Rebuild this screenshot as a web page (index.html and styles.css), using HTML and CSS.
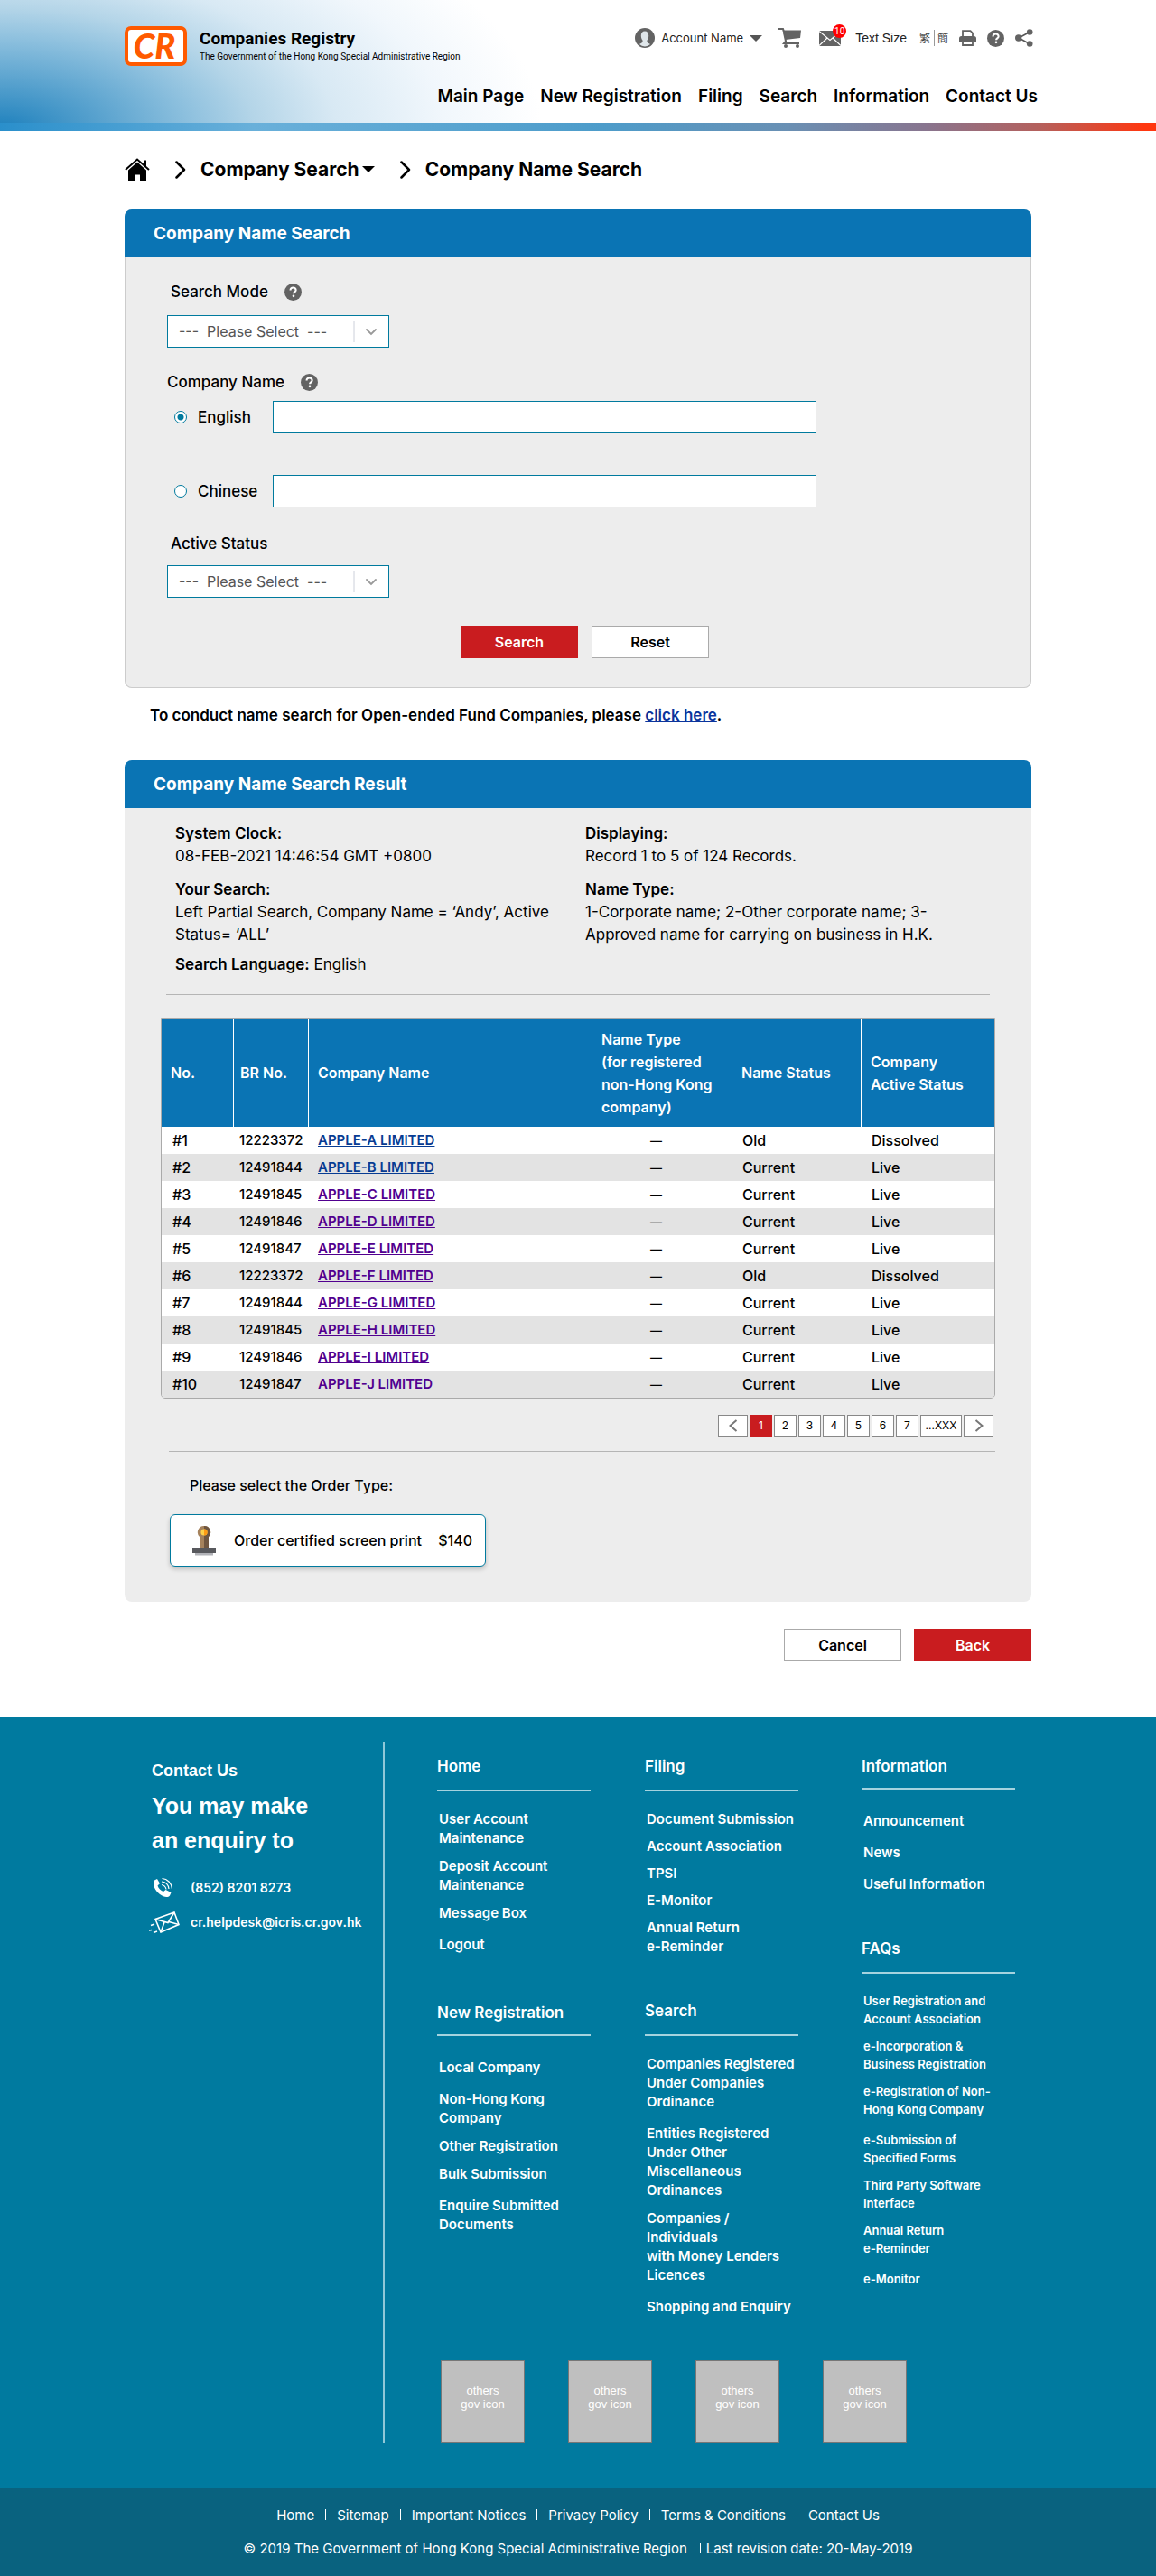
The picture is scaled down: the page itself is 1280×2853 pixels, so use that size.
FILE: index.html
```html
<!DOCTYPE html>
<html lang="en">
<head>
<meta charset="utf-8">
<meta name="viewport" content="width=device-width, initial-scale=1">
<title>Company Name Search - Companies Registry</title>
<link rel="stylesheet" href="styles.css">
</head>
<body>
<svg class="sprite" aria-hidden="true">
  <symbol id="i-help" viewBox="0 0 20 20"><circle cx="10" cy="10" r="10" fill="#636363"/><path d="M6.9 7.9C6.9 5.9 8.2 4.8 10.1 4.8s3.2 1.1 3.2 2.7c0 2.3-2.7 2.3-2.7 4.3" fill="none" stroke="#fff" stroke-width="2.2"/><circle cx="10.5" cy="14.6" r="1.4" fill="#fff"/></symbol>
  <symbol id="i-chevron" viewBox="0 0 12 20"><path d="M1.5 1.5L10 10l-8.500 8.500" fill="none" stroke="#000" stroke-width="2.500" stroke-linecap="round" stroke-linejoin="round"/></symbol>
  <symbol id="i-select" viewBox="0 0 40 36"><path d="M1 6v24" stroke="#ccd0da" stroke-width="1"/><path d="M15 16l5 5 5-5" fill="none" stroke="#999" stroke-width="1.800" stroke-linecap="round"/></symbol>
</svg>

<header class="header">
  <div class="header-inner">
    <a class="brand" href="#">
      <svg class="logo" viewBox="0 0 69 44" role="img" aria-label="CR"><rect x="2" y="2" width="65" height="40" rx="5" fill="#fff" stroke="#ff5a00" stroke-width="4"/><text x="33" y="36" text-anchor="middle" class="logo-text">CR</text></svg>
      <span class="brand-text"><strong>Companies Registry</strong><small>The Government of the Hong Kong Special Administrative Region</small></span>
    </a>
    <div class="header-side">
      <div class="tools">
        <button class="account" type="button">
          <svg width="22" height="22" viewBox="0 0 22 22"><circle cx="11" cy="11" r="11" fill="#636363"/><path d="M11 3.500c2.800 0 4.200 2 4.200 5 0 2.600-1 4.300-1.800 5.300 0 2.200.4 2.600 3.600 4.100A9.500 9.500 0 0 1 11 20.500 9.500 9.500 0 0 1 5 17.900c3.200-1.500 3.600-1.900 3.600-4.100-.8-1-1.800-2.700-1.800-5.300 0-3 1.400-5 4.200-5z" fill="#dfe6ea"/></svg>
          <span>Account Name</span>
          <svg width="14" height="7" viewBox="0 0 14 7"><path d="M0 0h14L7 7z" fill="#555"/></svg>
        </button>
        <a href="#" aria-label="Cart"><svg width="25" height="22" viewBox="0 0 25 22"><path d="M0 1h5l1 3" fill="none" stroke="#636363" stroke-width="2"/><path d="M4.500 2.500H25l-1 8.500L7.500 13z" fill="#636363"/><path d="M6 5l2 9.500-2 2.500h17" fill="none" stroke="#636363" stroke-width="2"/><circle cx="8" cy="20" r="2" fill="#636363"/><circle cx="21" cy="20" r="2" fill="#636363"/></svg></a>
        <a href="#" class="mail" aria-label="Messages"><svg width="24" height="17" viewBox="0 0 24 17"><rect width="24" height="17" fill="#636363"/><path d="M0 .5l12 10 12-10M0 16.500l9-8.500M24 16.500L15 8" fill="none" stroke="#fff" stroke-width="1.200"/></svg><span class="badge">10</span></a>
        <a href="#" class="text-size">Text Size</a>
        <span class="langs"><a href="#">繁</a><a href="#">簡</a></span>
        <a href="#" aria-label="Print"><svg width="19" height="18" viewBox="0 0 19 18"><path d="M4 8V1.200h8.500L15 3.700V8" fill="none" stroke="#636363" stroke-width="1.800"/><path d="M2.500 7h14A2.500 2.500 0 0 1 19 9.500V14h-3.500v-2h-12v2H0V9.500A2.500 2.500 0 0 1 2.500 7z" fill="#636363"/><path d="M4 12.500h11v4.500H4z" fill="#fff" stroke="#636363" stroke-width="1.800"/></svg></a>
        <a href="#" aria-label="Help"><svg width="19" height="19"><use href="#i-help"/></svg></a>
        <a href="#" aria-label="Share"><svg width="20" height="20" viewBox="0 0 20 20"><path d="M16 3.500L4 10l12 6.500" fill="none" stroke="#555" stroke-width="1.600"/><circle cx="16.200" cy="3.500" r="3.300" fill="#636363"/><circle cx="3.700" cy="10" r="3.700" fill="#636363"/><circle cx="16.200" cy="16.500" r="3.300" fill="#636363"/></svg></a>
      </div>
      <nav class="main-nav" aria-label="Main">
        <a href="#">Main Page</a><a href="#">New Registration</a><a href="#">Filing</a><a href="#">Search</a><a href="#">Information</a><a href="#">Contact Us</a>
      </nav>
    </div>
  </div>
</header>

<main class="container">
  <nav class="breadcrumb" aria-label="Breadcrumb">
    <a href="#" aria-label="Home"><svg width="28" height="25" viewBox="0 0 28 25"><path d="M1 13L14 1.500 27 13" fill="none" stroke="#000" stroke-width="2"/><path d="M21 2.500h3V10l-3-3z"/><path d="M14 4.500L24 13.500V25h-7v-6.500h-6V25H4V13.500z"/></svg></a>
    <svg class="crumb-sep" width="12" height="20"><use href="#i-chevron"/></svg>
    <a class="crumb-menu" href="#">Company Search<svg width="14" height="7" viewBox="0 0 14 7"><path d="M0 0h14L7 7z"/></svg></a>
    <svg class="crumb-sep" width="12" height="20"><use href="#i-chevron"/></svg>
    <span>Company Name Search</span>
  </nav>

  <section class="panel panel-outlined">
    <h1 class="panel-title">Company Name Search</h1>
    <form class="search-form">
      <div class="label-row"><label for="mode">Search Mode</label><svg width="19" height="19"><use href="#i-help"/></svg></div>
      <div class="select"><select id="mode"><option>---&nbsp; Please Select &nbsp;---</option></select><svg width="40" height="36"><use href="#i-select"/></svg></div>
      <div class="label-row name-label"><span id="company-name">Company Name</span><svg width="19" height="19"><use href="#i-help"/></svg></div>
      <div class="name-row"><label id="l-en"><input type="radio" name="lang" checked>English</label><input type="text" aria-labelledby="company-name l-en"></div>
      <div class="name-row"><label id="l-zh"><input type="radio" name="lang">Chinese</label><input type="text" aria-labelledby="company-name l-zh"></div>
      <div class="label-row"><label for="status">Active Status</label></div>
      <div class="select"><select id="status"><option>---&nbsp; Please Select &nbsp;---</option></select><svg width="40" height="36"><use href="#i-select"/></svg></div>
      <div class="form-actions"><button class="btn btn-primary" type="button">Search</button><button class="btn" type="reset">Reset</button></div>
    </form>
  </section>

  <p class="note">To conduct name search for Open-ended Fund Companies, please <a href="#">click here</a>.</p>

  <section class="panel">
    <h2 class="panel-title">Company Name Search Result</h2>
    <div class="result">
      <div class="summary">
        <div>
          <p><b>System Clock:</b><br>08-FEB-2021 14:46:54 GMT +0800</p>
          <p><b>Your Search:</b><br>Left Partial Search, Company Name = ‘Andy’, Active<br>Status= ‘ALL’</p>
          <p class="language"><b>Search Language:</b> English</p>
        </div>
        <div>
          <p><b>Displaying:</b><br>Record 1 to 5 of 124 Records.</p>
          <p><b>Name Type:</b><br>1-Corporate name; 2-Other corporate name; 3-<br>Approved name for carrying on business in H.K.</p>
        </div>
      </div>
      <hr>
      <table>
        <colgroup><col class="c-no"><col class="c-br"><col class="c-name"><col class="c-type"><col class="c-status"><col></colgroup>
        <thead><tr><th>No.</th><th>BR No.</th><th>Company Name</th><th>Name Type<br>(for registered<br>non-Hong Kong<br>company)</th><th>Name Status</th><th>Company<br>Active Status</th></tr></thead>
        <tbody>
          <tr><td>#1</td><td>12223372</td><td><a href="#">APPLE-A LIMITED</a></td><td>—</td><td>Old</td><td>Dissolved</td></tr>
          <tr><td>#2</td><td>12491844</td><td><a href="#">APPLE-B LIMITED</a></td><td>—</td><td>Current</td><td>Live</td></tr>
          <tr><td>#3</td><td>12491845</td><td><a class="seen" href="#">APPLE-C LIMITED</a></td><td>—</td><td>Current</td><td>Live</td></tr>
          <tr><td>#4</td><td>12491846</td><td><a class="seen" href="#">APPLE-D LIMITED</a></td><td>—</td><td>Current</td><td>Live</td></tr>
          <tr><td>#5</td><td>12491847</td><td><a class="seen" href="#">APPLE-E LIMITED</a></td><td>—</td><td>Current</td><td>Live</td></tr>
          <tr><td>#6</td><td>12223372</td><td><a class="seen" href="#">APPLE-F LIMITED</a></td><td>—</td><td>Old</td><td>Dissolved</td></tr>
          <tr><td>#7</td><td>12491844</td><td><a class="seen" href="#">APPLE-G LIMITED</a></td><td>—</td><td>Current</td><td>Live</td></tr>
          <tr><td>#8</td><td>12491845</td><td><a class="seen" href="#">APPLE-H LIMITED</a></td><td>—</td><td>Current</td><td>Live</td></tr>
          <tr><td>#9</td><td>12491846</td><td><a class="seen" href="#">APPLE-I LIMITED</a></td><td>—</td><td>Current</td><td>Live</td></tr>
          <tr><td>#10</td><td>12491847</td><td><a class="seen" href="#">APPLE-J LIMITED</a></td><td>—</td><td>Current</td><td>Live</td></tr>
        </tbody>
      </table>
      <nav class="pager" aria-label="Pages">
        <a class="wide" href="#" aria-label="Previous"><svg width="10" height="14" viewBox="0 0 10 14"><path d="M8.500 1L1.500 7l7 6" fill="none" stroke="#777" stroke-width="2"/></svg></a>
        <a class="current" href="#">1</a><a href="#">2</a><a href="#">3</a><a href="#">4</a><a href="#">5</a><a href="#">6</a><a href="#">7</a><a class="last" href="#">...XXX</a>
        <a class="wide" href="#" aria-label="Next"><svg width="10" height="14" viewBox="0 0 10 14"><path d="M1.500 1l7 6-7 6" fill="none" stroke="#777" stroke-width="2"/></svg></a>
      </nav>
      <hr>
      <p class="order-label">Please select the Order Type:</p>
      <button class="order" type="button">
        <svg width="26" height="33" viewBox="0 0 26 33"><path d="M13 0a7 7 0 0 1 5 12v12H8V12a7 7 0 0 1 5-12z" fill="#a5825c"/><path d="M13 0a7 7 0 0 1 5 12v12h-5z" fill="#6f5640"/><circle cx="13" cy="7" r="3.600" fill="#ffd24a"/><path d="M13 3.400a3.600 3.600 0 0 1 0 7.200z" fill="#ff9c14"/><path d="M0 24h26v6H0z" fill="#58595d"/><path d="M3 30h20v2.500H3z" fill="#b2b3b8"/></svg>
        <span>Order certified screen print</span><span class="price">$140</span>
      </button>
    </div>
  </section>

  <div class="page-actions"><button class="btn" type="button">Cancel</button><button class="btn btn-primary" type="button">Back</button></div>
</main>

<footer class="footer">
  <div class="container footer-main">
    <div class="contact">
      <h2>Contact Us</h2>
      <p class="lead">You may make<br>an enquiry to</p>
      <a href="#"><svg width="34" height="24" viewBox="0 0 34 24"><path d="M6 3.500L9 2l3 5-2.500 2.500c1 3 3.500 5.500 6.500 6.500l2.500-2 6 3-1.500 3.500c-2 2.500-6.500 2-11-1.500C6.500 15 3.500 8 6 3.500z" fill="#fff"/><path d="M14 8.500c3 .5 4.500 2 5 5M14 5c5 .5 7.500 3.500 8 8M14.500 1.500c6 .5 10.500 5 11 11.500" fill="none" stroke="#fff" stroke-width="1.200"/></svg><span>(852) 8201 8273</span></a>
      <a href="#"><svg width="34" height="24" viewBox="0 0 34 24"><g fill="none" stroke="#fff" stroke-width="1.600"><path d="M7 8.500L28 1l5 13.500L13 23z"/><path d="M7 8.500l14 4L28 1M13 23l4-11M33 14.500L22 11.500M6 14l-4 1.500M3 20.500l-3 .5M9 22l-4 1.500"/></g></svg><span>cr.helpdesk@icris.cr.gov.hk</span></a>
    </div>
    <div class="sitemap">
      <div class="sitemap-cols">
        <div class="col col-first">
          <section><h3>Home</h3>
            <ul><li><a href="#">User Account<br>Maintenance</a></li><li><a href="#">Deposit Account<br>Maintenance</a></li><li><a href="#">Message Box</a></li><li class="spaced"><a href="#">Logout</a></li></ul></section>
          <section class="low"><h3>New Registration</h3>
            <ul><li><a href="#">Local Company</a></li><li class="spaced"><a href="#">Non-Hong Kong<br>Company</a></li><li><a href="#">Other Registration</a></li><li><a href="#">Bulk Submission</a></li><li class="spaced"><a href="#">Enquire Submitted<br>Documents</a></li></ul></section>
        </div>
        <div class="col">
          <section class="filing"><h3>Filing</h3>
            <ul><li><a href="#">Document Submission</a></li><li><a href="#">Account Association</a></li><li><a href="#">TPSI</a></li><li><a href="#">E-Monitor</a></li><li><a href="#">Annual Return<br>e-Reminder</a></li></ul></section>
          <section><h3>Search</h3>
            <ul><li><a href="#">Companies Registered<br>Under Companies<br>Ordinance</a></li><li class="spaced"><a href="#">Entities Registered<br>Under Other<br>Miscellaneous<br>Ordinances</a></li><li><a href="#">Companies /<br>Individuals<br>with Money Lenders<br>Licences</a></li><li class="spaced"><a href="#">Shopping and Enquiry</a></li></ul></section>
        </div>
        <div class="col">
          <section class="low"><h3>Information</h3>
            <ul><li><a href="#">Announcement</a></li><li class="spaced"><a href="#">News</a></li><li class="spaced"><a href="#">Useful Information</a></li></ul></section>
          <section class="faqs"><h3>FAQs</h3>
            <ul><li><a href="#">User Registration and<br>Account Association</a></li><li><a href="#">e-Incorporation &amp;<br>Business Registration</a></li><li><a href="#">e-Registration of Non-<br>Hong Kong Company</a></li><li class="spaced"><a href="#">e-Submission of<br>Specified Forms</a></li><li><a href="#">Third Party Software<br>Interface</a></li><li><a href="#">Annual Return<br>e-Reminder</a></li><li class="spaced"><a href="#">e-Monitor</a></li></ul></section>
        </div>
      </div>
      <div class="gov">
        <a href="#">others<br>gov icon</a><a href="#">others<br>gov icon</a><a href="#">others<br>gov icon</a><a href="#">others<br>gov icon</a>
      </div>
    </div>
  </div>
  <div class="legal">
    <nav aria-label="Legal"><a href="#">Home</a><a href="#">Sitemap</a><a href="#">Important Notices</a><a href="#">Privacy Policy</a><a href="#">Terms &amp; Conditions</a><a href="#">Contact Us</a></nav>
    <p><span>© 2019 The Government of Hong Kong Special Administrative Region</span><span>Last revision date: 20-May-2019</span></p>
  </div>
</footer>
</body>
</html>
```
FILE: styles.css
```css
* { box-sizing: border-box; }
body { margin: 0; background: #fff; color: #000; font: 500 17px/24px Inter, "Noto Sans CJK TC", sans-serif; }
h1, h2, h3, p, ul { margin: 0; padding: 0; }
ul { list-style: none; }
a { color: inherit; text-decoration: none; }
button, input, select { font: inherit; color: inherit; }
svg { display: block; flex: none; }
.sprite { position: absolute; width: 0; height: 0; }
.container { max-width: 1004px; margin: 0 auto; }

/* Header */
.header { position: relative; background: radial-gradient(ellipse 600px 290px at 0 100%, #1b7fbc 0, #8dc0de 35%, #b4d5e8 47%, #d8e9f4 62%, #f1f7fc 82%, #fff 100%); padding-bottom: 9px; }
.header::after { content: ""; display: block; position: absolute; left: 0; right: 0; bottom: 0; height: 9px; background: linear-gradient(90deg, #2a8fcb 0, #69b0da 22%, #4d9cca 52%, #6990b4 68%, #88758f 80%, #b5605c 90%, #ff3710 99%); }
.header-inner { max-width: 1018px; height: 136px; margin: 0 auto; display: flex; justify-content: space-between; align-items: flex-start; }
.brand { display: flex; gap: 14px; width: 346px; padding: 29px 0 0 7px; font-family: Roboto, sans-serif; white-space: nowrap; }
.logo { width: 69px; height: 44px; overflow: visible; }
.logo-text { font: italic 900 38px Lato, sans-serif; fill: #ff5a00; }
.brand-text { display: flex; flex-direction: column; padding-top: 2px; }
.brand-text strong { font-size: 19px; line-height: 24px; font-weight: 700; }
.brand-text small { font-size: 10px; line-height: 16px; font-weight: 400; }
.header-side { padding-top: 27px; }
.tools { display: flex; align-items: center; justify-content: flex-end; height: 30px; padding-right: 5px; }
.tools a { margin-left: 12px; }
.account { display: flex; align-items: center; gap: 7px; padding: 0; border: 0; background: none; font-size: 13px; font-weight: 400; color: #222; }
.tools .account + a { margin-left: 18px; }
.tools .mail { position: relative; margin-left: 20px; }
.badge { position: absolute; left: 15px; top: -7px; width: 15px; height: 15px; border-radius: 50%; background: #f00; color: #fff; font: 10px/15px Roboto, sans-serif; text-align: center; }
.tools .text-size { margin-left: 16px; font: 14px/24px "Liberation Sans", sans-serif; color: #222; }
.langs { display: flex; margin-left: 14px; font: 12px/18px "Noto Sans CJK TC", sans-serif; color: #444; }
.tools .langs a { margin: 0; }
.tools .langs a + a { border-left: 1px solid #999; padding-left: 3px; margin-left: 4px; }
.main-nav { display: flex; justify-content: flex-end; gap: 18px; margin-top: 38px; font-size: 19px; font-weight: 600; white-space: nowrap; }

/* Breadcrumb */
.breadcrumb { display: flex; align-items: center; height: 87px; font-size: 21px; font-weight: 700; padding-bottom: 2px; }
.crumb-sep { margin: 0 16px 0 28px; }
.crumb-menu { display: flex; align-items: center; gap: 3px; }

/* Panels */
.panel { background: #ededed; border-radius: 8px; overflow: hidden; }
.panel-outlined { box-shadow: inset 0 0 0 1px #ccc; }
.panel-title { height: 53px; padding-left: 32px; background: #0a74b4; color: #fff; font-size: 19px; line-height: 53px; font-weight: 700; }
.search-form { padding: 26px 47px 33px; }
.label-row { display: flex; align-items: center; gap: 18px; height: 24px; padding-left: 4px; }
.select { position: relative; width: 246px; margin-top: 14px; }
.name-row ~ .select { margin-top: 12px; }
.select select { display: block; width: 100%; height: 36px; padding: 0 12px; border: 1px solid #007a9e; border-radius: 0; background: #fff; color: #555; font-size: 16px; font-weight: 400; appearance: none; }
.select svg { position: absolute; right: 0; top: 0; pointer-events: none; }
.name-label { margin: 26px 0 9px; padding-left: 0; }
.name-row { display: flex; align-items: center; margin-bottom: 46px; }
.name-row:has(+ .label-row) { margin-bottom: 28px; }
.name-row label { display: flex; align-items: center; gap: 12px; width: 117px; padding-left: 8px; }
.name-row input[type="text"] { flex: 0 1 602px; height: 36px; border: 1px solid #007a9e; background: #fff; padding: 0 8px; }
.name-row input[type="radio"] { appearance: none; width: 14px; height: 14px; margin: 0; border: 1px solid #007a9e; border-radius: 50%; background: #fff; }
.name-row input[type="radio"]:checked { background: radial-gradient(circle, #007a9e 0 3px, #fff 4px); }
.form-actions { display: flex; justify-content: center; gap: 15px; margin-top: 31px; padding-left: 15px; }
.btn { width: 130px; height: 36px; padding: 0; border: 1px solid #aaa; background: #fff; font-size: 16px; font-weight: 600; }
.btn-primary { background: #c91c1f; border-color: #c91c1f; color: #fff; }
.note { margin: 18px 28px 38px; font-weight: 600; }
.note a { color: #0b349c; text-decoration: underline; }

/* Results */
.result { padding: 16px 40px 39px; font-size: 16px; }
.summary { display: grid; grid-template-columns: 454px 1fr; padding-left: 16px; font-size: 17px; font-weight: 400; line-height: 25px; }
.summary p + p { margin-top: 12px; }
.summary .language { margin-top: 8px; }
.summary b { font-weight: 600; }
hr { height: 1px; margin: 20px 6px 26px; border: 0; background: #b5b5b5; }
table { width: 100%; table-layout: fixed; border-collapse: separate; border-spacing: 0; border: 1px solid #aaa; border-radius: 0 0 5px 5px; overflow: hidden; }
.c-no { width: 79px; } .c-br { width: 83px; } .c-name { width: 314px; } .c-type { width: 155px; } .c-status { width: 143px; }
th { height: 119px; padding: 0 0 0 10px; background: #0a74b4; color: #fff; text-align: left; font-weight: 600; line-height: 25px; white-space: nowrap; }
th + th { border-left: 1px solid #fff; }
th:nth-child(2), td:nth-child(2) { padding-left: 7px; }
td { height: 30px; padding: 0 0 0 12px; background: #fff; }
td:nth-child(2), td:nth-child(3) { font-size: 15px; }
td:nth-child(3) { padding-left: 11px; }
td:nth-child(4) { padding: 0 12px 0 0; text-align: center; font-size: 13px; }
tr:nth-child(even) td { background: #e3e3e3; }
td a { color: #073c93; font-weight: 600; text-decoration: underline; }
td .seen { color: #51008f; }
.pager { display: flex; justify-content: flex-end; gap: 2px; margin: 18px 2px 16px 0; font-size: 12px; font-weight: 400; }
.pager a { display: flex; align-items: center; justify-content: center; width: 25px; height: 24px; border: 1px solid #888; background: #fff; }
.pager .current { background: #c91c1f; border-color: #c91c1f; color: #fff; }
.pager .wide { width: 33px; }
.pager .last { width: 46px; }
.pager + hr { margin: 0 0 25px 9px; }
.order-label { padding-left: 32px; }
.order { display: flex; align-items: center; width: 350px; height: 58px; margin: 20px 0 0 10px; padding: 0 14px 0 24px; border: 1px solid #007a9e; border-radius: 6px; background: #fff; box-shadow: 0 3px 5px #0003; }
.order span { margin-left: 20px; }
.order .price { margin-left: auto; }
.page-actions { display: flex; justify-content: flex-end; gap: 14px; margin: 30px 0 62px; }

/* Footer */
.footer { background: #007a9f; color: #fff; }
.footer-main { display: grid; grid-template-columns: 288px 1fr; padding: 27px 0 49px; }
.contact { padding: 20px 0 0 30px; border-right: 2px solid #8fc8d8; font-size: 14px; font-weight: 600; }
.contact h2 { font: 700 18px/24px "Liberation Sans", sans-serif; }
.contact .lead { margin: 8px 0 15px; font: 700 25px/38px "Liberation Sans", sans-serif; }
.contact a { display: flex; align-items: center; gap: 12px; height: 38px; margin-left: -3px; }
.sitemap { padding: 15px 0 0 58px; }
.sitemap-cols { display: grid; grid-template-columns: 230px 240px 170px; font-size: 15px; font-weight: 600; line-height: 21px; white-space: nowrap; }
.col section + section { margin-top: 49px; }
.col-first section + section { margin-top: 53px; }
.col h3 { width: 170px; padding-bottom: 14px; border-bottom: 2px solid #a5d3df; font-size: 17px; line-height: 24px; font-weight: 600; }
.col ul { display: flex; flex-direction: column; gap: 10px; margin: 20px 0 0 2px; }
.col .filing ul { gap: 9px; }
.col .low h3 { padding-bottom: 12px; }
.col .low ul { margin-top: 24px; }
.col .spaced { margin-top: 4px; }
.col .faqs ul { font-size: 13px; line-height: 20px; }
.gov { display: flex; gap: 48px; margin: 49px 0 0 4px; }
.gov a { width: 93px; height: 92px; padding-top: 25px; background: #bfbfbf; border: 1px solid #777; text-align: center; font: 13px/15px "Liberation Sans", sans-serif; }
.legal { padding: 19px 0 18px; background: #09627f; text-align: center; font-size: 15px; font-weight: 400; }
.legal nav { display: flex; justify-content: center; }
.legal nav a + a::before { content: ""; display: inline-block; width: 1px; height: 12px; margin: 0 12px; background: #fff; }
.legal p { margin-top: 13px; }
.legal span + span::before { content: ""; display: inline-block; width: 1px; height: 12px; margin: 0 6px 0 14px; background: #fff; }
```
